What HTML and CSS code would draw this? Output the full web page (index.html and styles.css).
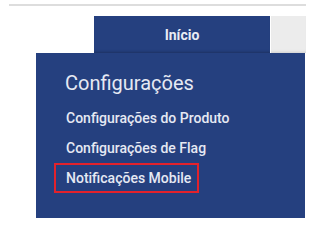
FILE: index.html
```html
<!DOCTYPE html>
<html lang="pt">
<head>
<meta charset="utf-8">
<link rel="stylesheet" href="styles.css">
</head>
<body>
<div class="page">
  <div class="rule"></div>
  <div class="nav">
    <div class="tab">Início</div>
    <div class="rest"></div>
  </div>
  <div class="panel">
    <div class="heading">Configurações</div>
    <ul class="menu">
      <li class="item">Configurações do Produto</li>
      <li class="item">Configurações de Flag</li>
      <li class="item active">Notificações Mobile</li>
    </ul>
  </div>
</div>
</body>
</html>
```
FILE: styles.css
```css
html, body {
  margin: 0;
  padding: 0;
  background: #ffffff;
}
body {
  font-family: Roboto, "Liberation Sans", Arial, sans-serif;
  width: 323px;
  height: 226px;
  overflow: hidden;
}
.page {
  padding-top: 4px;
}
.rule {
  height: 2px;
  margin-left: 9px;
  width: 297px;
  background: #dddddd;
}
.nav {
  display: flex;
  margin-top: 10px;
  margin-left: 94px;
  height: 37px;
}
.tab {
  width: 176px;
  background: #25407f;
  color: #e9ecf4;
  font-weight: 700;
  font-size: 14px;
  display: flex;
  align-items: center;
  justify-content: center;
  box-shadow: inset 0 -3px 3px -2px rgba(0,0,0,0.25);
}
.rest {
  width: 35px;
  margin-left: 1px;
  background: #ececec;
  box-shadow: inset 0 -3px 3px -2px rgba(0,0,0,0.12);
}
.panel {
  margin-left: 36px;
  width: 269px;
  height: 165px;
  box-sizing: border-box;
  background: #25407f;
  padding: 18px 0 0 18px;
  color: #e6e9f3;
}
.heading {
  font-size: 20px;
  line-height: 24px;
  font-weight: 400;
  margin-left: 11px;
  margin-bottom: 8px;
}
.menu {
  list-style: none;
  margin: 0;
  padding: 0;
}
.item {
  display: block;
  width: max-content;
  font-size: 14px;
  font-weight: 500;
  line-height: 16px;
  padding: 5px 6px 5px 10px;
  border: 2px solid transparent;
}
.item.active {
  border-color: #e3222b;
}
```
